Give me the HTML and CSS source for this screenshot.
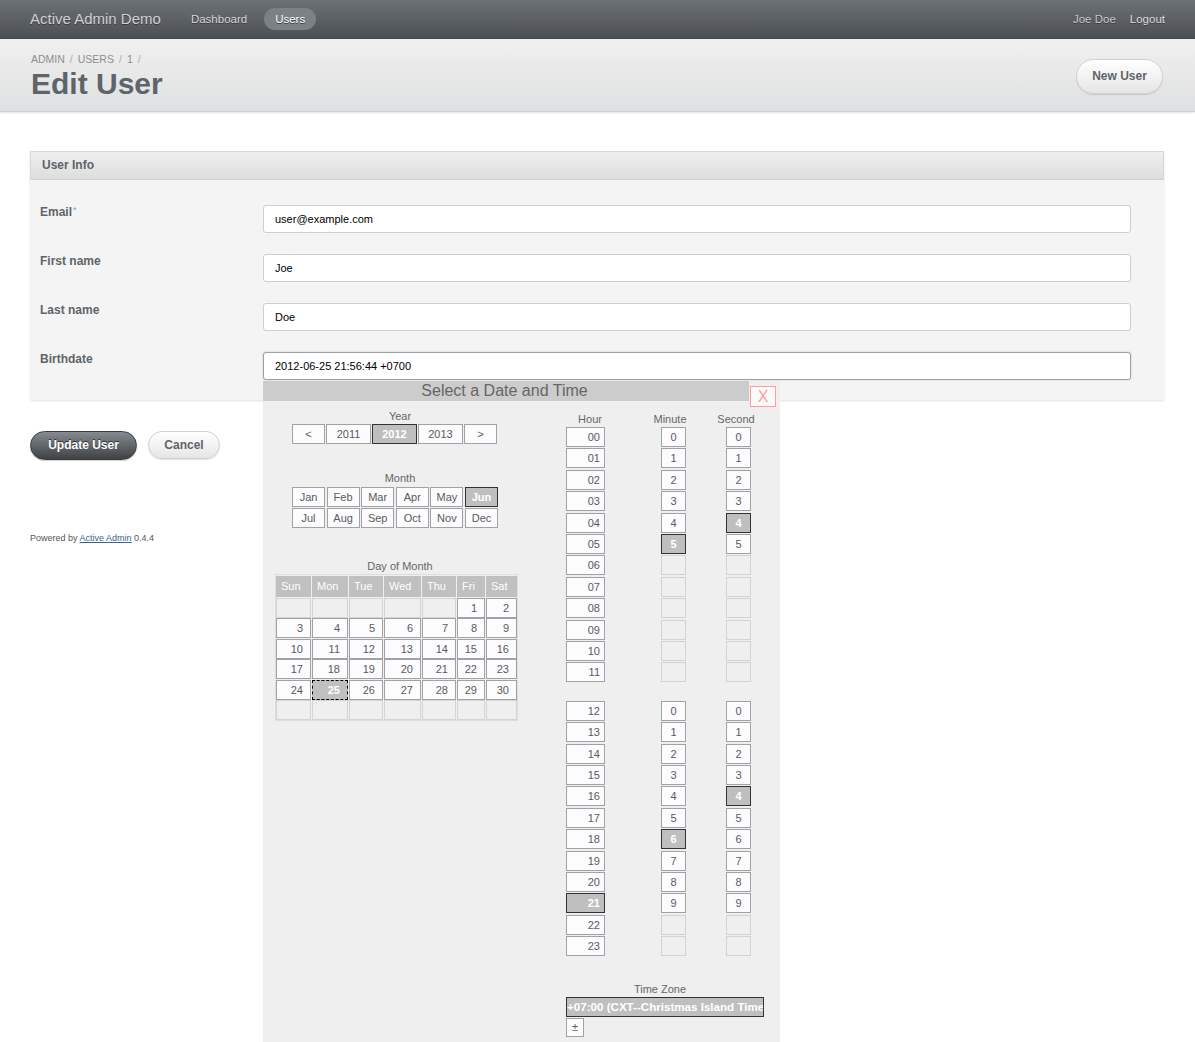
FILE: index.html
```html
<!DOCTYPE html>
<html>
<head>
<meta charset="utf-8">
<title>Edit User | Active Admin Demo</title>
<link rel="stylesheet" href="styles.css">
</head>
<body>
<div class="header">
  <h1 class="site-title">Active Admin Demo</h1>
  <nav class="tabs">
    <a class="tab">Dashboard</a>
    <a class="tab current">Users</a>
  </nav>
  <div class="utility">
    <span class="user">Joe Doe</span>
    <a class="logout">Logout</a>
  </div>
</div>

<div class="title-bar">
  <div class="titles">
    <div class="breadcrumb">ADMIN<span class="sep">/</span>USERS<span class="sep">/</span>1<span class="sep">/</span></div>
    <h2 class="page-title">Edit User</h2>
  </div>
  <a class="btn-light btn-new">New User</a>
</div>

<div class="main">
  <div class="panel">
    <div class="panel-head">User Info</div>
    <div class="panel-body">
      <div class="row"><label class="lbl">Email<abbr>*</abbr></label><input class="field" type="text" value="user@example.com"></div>
      <div class="row"><label class="lbl">First name</label><input class="field" type="text" value="Joe"></div>
      <div class="row"><label class="lbl">Last name</label><input class="field" type="text" value="Doe"></div>
      <div class="row"><label class="lbl">Birthdate</label><input class="field focused" type="text" value="2012-06-25 21:56:44 +0700"></div>
    </div>
  </div>
  <div class="actions">
    <a class="btn-dark">Update User</a>
    <a class="btn-light btn-cancel">Cancel</a>
  </div>
  <div class="footer">Powered by <a class="footer-link">Active Admin</a> 0.4.4</div>
</div>

<div class="picker">
  <div class="picker-title">Select a Date and Time</div>
  <div class="picker-x">X</div>
  <div class="picker-body">
    <div class="dates">
      <div class="plabel year-label">Year</div>
      <div class="year-row">
        <div class="pbtn yb-s">&lt;</div>
        <div class="pbtn yb">2011</div>
        <div class="pbtn yb sel">2012</div>
        <div class="pbtn yb">2013</div>
        <div class="pbtn yb-s">&gt;</div>
      </div>
      <div class="plabel month-label">Month</div>
      <div class="month-grid">
        <div class="pbtn">Jan</div><div class="pbtn">Feb</div><div class="pbtn">Mar</div><div class="pbtn">Apr</div><div class="pbtn">May</div><div class="pbtn sel">Jun</div>
        <div class="pbtn">Jul</div><div class="pbtn">Aug</div><div class="pbtn">Sep</div><div class="pbtn">Oct</div><div class="pbtn">Nov</div><div class="pbtn">Dec</div>
      </div>
      <div class="plabel day-label">Day of Month</div>
      <div class="day-grid">
        <div class="dh">Sun</div><div class="dh">Mon</div><div class="dh">Tue</div><div class="dh">Wed</div><div class="dh">Thu</div><div class="dh">Fri</div><div class="dh">Sat</div>
        <div class="dc empty"></div><div class="dc empty"></div><div class="dc empty"></div><div class="dc empty"></div><div class="dc empty"></div><div class="dc">1</div><div class="dc">2</div>
        <div class="dc">3</div><div class="dc">4</div><div class="dc">5</div><div class="dc">6</div><div class="dc">7</div><div class="dc">8</div><div class="dc">9</div>
        <div class="dc">10</div><div class="dc">11</div><div class="dc">12</div><div class="dc">13</div><div class="dc">14</div><div class="dc">15</div><div class="dc">16</div>
        <div class="dc">17</div><div class="dc">18</div><div class="dc">19</div><div class="dc">20</div><div class="dc">21</div><div class="dc">22</div><div class="dc">23</div>
        <div class="dc">24</div><div class="dc today">25</div><div class="dc">26</div><div class="dc">27</div><div class="dc">28</div><div class="dc">29</div><div class="dc">30</div>
        <div class="dc empty"></div><div class="dc empty"></div><div class="dc empty"></div><div class="dc empty"></div><div class="dc empty"></div><div class="dc empty"></div><div class="dc empty"></div>
      </div>
    </div>

    <div class="times">
      <div class="tcols">
        <div class="tcol hour-col">
          <div class="plabel tlabel">Hour</div>
          <div class="half">
            <div class="tb hb">00</div><div class="tb hb">01</div><div class="tb hb">02</div><div class="tb hb">03</div><div class="tb hb">04</div><div class="tb hb">05</div>
            <div class="tb hb">06</div><div class="tb hb">07</div><div class="tb hb">08</div><div class="tb hb">09</div><div class="tb hb">10</div><div class="tb hb">11</div>
          </div>
          <div class="half second-half">
            <div class="tb hb">12</div><div class="tb hb">13</div><div class="tb hb">14</div><div class="tb hb">15</div><div class="tb hb">16</div><div class="tb hb">17</div>
            <div class="tb hb">18</div><div class="tb hb">19</div><div class="tb hb">20</div><div class="tb hb sel">21</div><div class="tb hb">22</div><div class="tb hb">23</div>
          </div>
        </div>
        <div class="tcol min-col">
          <div class="plabel tlabel">Minute</div>
          <div class="half">
            <div class="tb mb">0</div><div class="tb mb">1</div><div class="tb mb">2</div><div class="tb mb">3</div><div class="tb mb">4</div><div class="tb mb sel">5</div>
            <div class="tb mb off"></div><div class="tb mb off"></div><div class="tb mb off"></div><div class="tb mb off"></div><div class="tb mb off"></div><div class="tb mb off"></div>
          </div>
          <div class="half second-half">
            <div class="tb mb">0</div><div class="tb mb">1</div><div class="tb mb">2</div><div class="tb mb">3</div><div class="tb mb">4</div><div class="tb mb">5</div>
            <div class="tb mb sel">6</div><div class="tb mb">7</div><div class="tb mb">8</div><div class="tb mb">9</div><div class="tb mb off"></div><div class="tb mb off"></div>
          </div>
        </div>
        <div class="tcol sec-col">
          <div class="plabel tlabel">Second</div>
          <div class="half">
            <div class="tb mb">0</div><div class="tb mb">1</div><div class="tb mb">2</div><div class="tb mb">3</div><div class="tb mb sel">4</div><div class="tb mb">5</div>
            <div class="tb mb off"></div><div class="tb mb off"></div><div class="tb mb off"></div><div class="tb mb off"></div><div class="tb mb off"></div><div class="tb mb off"></div>
          </div>
          <div class="half second-half">
            <div class="tb mb">0</div><div class="tb mb">1</div><div class="tb mb">2</div><div class="tb mb">3</div><div class="tb mb sel">4</div><div class="tb mb">5</div>
            <div class="tb mb">6</div><div class="tb mb">7</div><div class="tb mb">8</div><div class="tb mb">9</div><div class="tb mb off"></div><div class="tb mb off"></div>
          </div>
        </div>
      </div>
      <div class="plabel tz-label">Time Zone</div>
      <div class="tz-select">+07:00 (CXT--Christmas Island Time)</div>
      <div class="pbtn tz-toggle">±</div>
    </div>
  </div>
</div>
</body>
</html>
```

FILE: styles.css
```css
* { box-sizing: border-box; }

html, body {
  margin: 0;
  padding: 0;
}

body {
  font-family: "Liberation Sans", Arial, Helvetica, sans-serif;
  background: #ffffff;
  color: #323537;
  position: relative;
  min-height: 1042px;
  overflow: hidden;
}

a { text-decoration: none; cursor: pointer; }

/* ---------- header ---------- */
.header {
  height: 39px;
  display: flex;
  align-items: center;
  padding: 0 30px;
  background: linear-gradient(#6c7176, #4c5055);
  border-bottom: 1px solid #45494d;
}

.site-title {
  margin: 0 19px 0 0;
  font-size: 15px;
  font-weight: normal;
  color: #d0d1d2;
  text-shadow: 0 1px 0 #3a3d40;
  line-height: 20px;
}

.tabs {
  display: flex;
  gap: 6px;
}

.tab {
  height: 22px;
  line-height: 22px;
  padding: 0 11px;
  border-radius: 11px;
  font-size: 11.5px;
  color: #d6d7d8;
  text-shadow: 0 1px 0 #3a3d40;
}

.tab.current {
  background: #7c8186;
  color: #ffffff;
}

.utility {
  margin-left: auto;
  display: flex;
  gap: 14px;
  font-size: 11.5px;
  color: #c8c9ca;
  text-shadow: 0 1px 0 #3a3d40;
}

.utility .logout { color: #dcdddd; }

/* ---------- title bar ---------- */
.title-bar {
  display: flex;
  align-items: center;
  padding: 13px 32px 9px 30px;
  background: linear-gradient(#f0f0f0, #dfe0e1);
  border-bottom: 1px solid #cdcfd1;
  box-shadow: 0 1px 2px rgba(0, 0, 0, 0.12);
}

.titles { flex: 1; }

.breadcrumb {
  font-size: 10.5px;
  line-height: 14px;
  color: #8a8f94;
  padding-left: 1px;
}

.breadcrumb .sep {
  margin: 0 5px;
  color: #a9adb1;
}

.page-title {
  margin: 0;
  padding-left: 1px;
  font-size: 30px;
  line-height: 36px;
  font-weight: bold;
  color: #5e6469;
}

.btn-light {
  display: inline-block;
  border: 1px solid #cfd1d3;
  background: linear-gradient(#ffffff, #e6e6e6);
  color: #5e6469;
  font-weight: bold;
  font-size: 12px;
  text-align: center;
  box-shadow: 0 1px 1px rgba(0, 0, 0, 0.12);
}

.btn-new {
  width: 87px;
  height: 35px;
  line-height: 33px;
  border-radius: 18px;
  margin-top: -2px;
}

/* ---------- main ---------- */
.main {
  padding: 39px 31px 0 30px;
}

.panel {
  background: #f4f4f4;
  box-shadow: 0 1px 2px rgba(0, 0, 0, 0.12);
}

.panel-head {
  height: 29px;
  line-height: 27px;
  padding-left: 11px;
  font-size: 12px;
  font-weight: bold;
  color: #5e6469;
  background: linear-gradient(#efefef, #dcdddd);
  border: 1px solid #d6d7d8;
  border-bottom-color: #cdcfd1;
}

.panel-body {
  padding: 25px 33px 20px 10px;
  display: flex;
  flex-direction: column;
  gap: 21px;
}

.row {
  display: flex;
  align-items: flex-start;
}

.lbl {
  width: 223px;
  flex: none;
  font-size: 12px;
  line-height: 14px;
  font-weight: bold;
  color: #5e6469;
}

.lbl abbr {
  font-size: 9px;
  color: #a0a0a0;
  vertical-align: top;
  line-height: 10px;
  font-weight: normal;
  text-decoration: none;
  margin-left: 1px;
}

.field {
  flex: 1;
  height: 28px;
  border: 1px solid #c9d0d6;
  border-radius: 3px;
  padding: 0 11px;
  font-family: "Liberation Sans", Arial, sans-serif;
  font-size: 11px;
  color: #000000;
  background: #ffffff;
  outline: none;
}

.field.focused {
  border-color: #99a0a6;
  box-shadow: 0 0 2px rgba(0, 0, 0, 0.2);
}

.actions {
  display: flex;
  align-items: flex-start;
  gap: 11px;
  margin-top: 31px;
}

.btn-dark {
  display: inline-block;
  width: 107px;
  height: 29px;
  line-height: 27px;
  border-radius: 15px;
  border: 1px solid #3a3e41;
  background: linear-gradient(#858b91, #3e4246);
  color: #ffffff;
  font-weight: bold;
  font-size: 12px;
  text-align: center;
  text-shadow: 0 -1px 0 #2a2d30;
  box-shadow: 0 1px 1px rgba(0, 0, 0, 0.2);
}

.btn-cancel {
  width: 72px;
  height: 28px;
  line-height: 26px;
  border-radius: 14px;
}

.footer {
  margin-top: 72px;
  font-size: 9px;
  line-height: 12px;
  color: #555555;
}

.footer-link {
  color: #38678b;
  text-decoration: underline;
}

/* ---------- date/time picker ---------- */
.picker {
  position: absolute;
  top: 381px;
  left: 263px;
  width: 517px;
  height: 661px;
  background: #efefef;
  font-size: 11px;
  color: #5a5a5a;
}

.picker-title {
  height: 20px;
  margin-right: 31px;
  background: #cccccc;
  color: #666666;
  font-size: 16px;
  line-height: 20px;
  text-align: center;
  padding-right: 3px;
}

.picker-x {
  position: absolute;
  top: 5px;
  right: 4px;
  width: 26px;
  height: 21px;
  border: 1px solid #ff9d9d;
  background: #fafafa;
  color: #ffa0a0;
  font-size: 16px;
  line-height: 19px;
  text-align: center;
}

.picker-body {
  display: flex;
  align-items: flex-start;
}

.plabel {
  line-height: 14px;
  text-align: center;
  color: #666666;
}

.dates {
  width: 274px;
  flex: none;
}

.year-label { margin-top: 8px; }

.pbtn {
  height: 20px;
  line-height: 18px;
  border: 1px solid #a2a2a2;
  background: #fcfcfe;
  color: #5a5a5a;
  text-align: center;
}

.pbtn.sel {
  background: #bfbfbf;
  border-color: #333333;
  color: #ffffff;
  font-weight: bold;
}

.year-row {
  display: flex;
  gap: 1px;
  margin: 1px 0 0 29px;
}

.yb { width: 45px; }
.yb-s { width: 33px; }

.month-label { margin-top: 27px; }

.month-grid {
  display: grid;
  grid-template-columns: repeat(6, 33px);
  column-gap: 1.6px;
  row-gap: 1px;
  margin: 2px 0 0 29px;
}

.day-label { margin-top: 31px; }

.day-grid {
  display: grid;
  grid-template-columns: 35px 36px 34px 37px 34px 28px 31px;
  grid-template-rows: 21px;
  grid-auto-rows: 20px;
  column-gap: 1px;
  row-gap: 0.5px;
  width: 243px;
  margin: 1px 0 0 12px;
  padding-top: 1px;
  border: 1px solid #dedede;
}

.dh {
  background: #c0c0c0;
  color: #ffffff;
  line-height: 21px;
  padding-left: 5px;
}

.dc {
  border: 1px solid #a2a2a2;
  background: #fcfcfe;
  text-align: right;
  padding-right: 7px;
  line-height: 18px;
  color: #5a5a5a;
}

.dc.empty {
  border-color: #d4d4d4;
  background: transparent;
}

.dc.today {
  background: #c0c0c0;
  border: 1px dashed #000000;
  color: #ffffff;
  font-weight: bold;
}

.times {
  margin-left: 29px;
  width: 214px;
  flex: none;
}

.tcols {
  display: flex;
  align-items: flex-start;
}

.tcol {
  display: flex;
  flex-direction: column;
}

.hour-col { width: 48px; }
.min-col { width: 40px; margin-left: 36px; }
.sec-col { width: 40px; margin-left: 26px; }

.tlabel { margin-top: 11px; }

.half {
  display: flex;
  flex-direction: column;
  gap: 1.4px;
  margin-top: 1px;
}

.half.second-half { margin-top: 18.6px; }

.tb {
  height: 20px;
  line-height: 18px;
  border: 1px solid #a2a2a2;
  background: #fcfcfe;
  color: #5a5a5a;
}

.hb {
  width: 39px;
  text-align: right;
  padding-right: 4px;
}

.mb {
  width: 25px;
  text-align: center;
}

.min-col .mb { margin-left: 11px; }
.sec-col .mb { margin-left: 10px; }

.tb.sel {
  background: #bfbfbf;
  border-color: #333333;
  color: #ffffff;
  font-weight: bold;
}

.tb.off {
  background: transparent;
  border-color: #d2d2d2;
}

.tz-label {
  width: 188px;
  margin-top: 25.6px;
}

.tz-select {
  width: 198px;
  height: 20px;
  margin-top: 1px;
  line-height: 18px;
  border: 1px solid #333333;
  background: #bfbfbf;
  color: #ffffff;
  font-weight: bold;
  font-size: 11.6px;
  white-space: nowrap;
  overflow: hidden;
}

.tz-toggle {
  width: 18px;
  height: 19px;
  line-height: 17px;
  margin-top: 1px;
}
```
